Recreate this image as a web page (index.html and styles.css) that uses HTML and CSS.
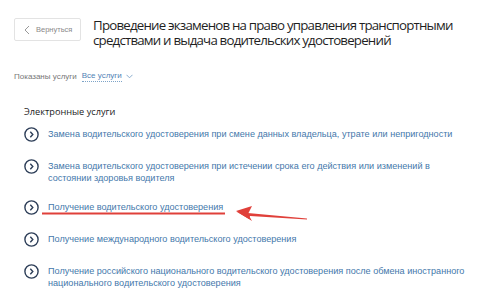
FILE: index.html
```html
<!DOCTYPE html>
<html lang="ru">
<head>
<meta charset="utf-8">
<link rel="stylesheet" href="styles.css">
</head>
<body>
<div class="page">
  <header class="head">
    <a class="back">
      <svg width="6" height="10" viewBox="0 0 6 10"><path d="M5 1 L1 5 L5 9" fill="none" stroke="#999" stroke-width="1"/></svg>
      <span>Вернуться</span>
    </a>
    <h1 class="title">Проведение экзаменов на право управления транспортными средствами и выдача водительских удостоверений</h1>
  </header>
  <div class="filter">
    <span class="label">Показаны услуги</span>
    <span class="select">Все услуги</span>
    <svg class="caret" width="7" height="5" viewBox="0 0 7 5"><path d="M0.5 0.8 L3.5 3.8 L6.5 0.8" fill="none" stroke="#7ea4c8" stroke-width="0.9"/></svg>
  </div>
  <section class="services">
    <h2 class="sub">Электронные услуги</h2>
    <ul class="list">
      <li class="item"><span class="ico"><svg width="15" height="15" viewBox="0 0 15 15"><circle cx="7.5" cy="7.5" r="6.6" fill="none" stroke="#2d3e58" stroke-width="1.4"/><path d="M6.3 4.8 L8.8 7.5 L6.3 10.2" fill="none" stroke="#2d3e58" stroke-width="1.4"/></svg></span><span class="txt">Замена водительского удостоверения при смене данных владельца, утрате или непригодности</span></li>
      <li class="item"><span class="ico"><svg width="15" height="15" viewBox="0 0 15 15"><circle cx="7.5" cy="7.5" r="6.6" fill="none" stroke="#2d3e58" stroke-width="1.4"/><path d="M6.3 4.8 L8.8 7.5 L6.3 10.2" fill="none" stroke="#2d3e58" stroke-width="1.4"/></svg></span><span class="txt">Замена водительского удостоверения при истечении срока его действия или изменений в состоянии здоровья водителя</span></li>
      <li class="item marked"><span class="ico"><svg width="15" height="15" viewBox="0 0 15 15"><circle cx="7.5" cy="7.5" r="6.6" fill="none" stroke="#2d3e58" stroke-width="1.4"/><path d="M6.3 4.8 L8.8 7.5 L6.3 10.2" fill="none" stroke="#2d3e58" stroke-width="1.4"/></svg></span><span class="txt">Получение водительского удостоверения</span>
        <svg class="arrow" width="280" height="20" viewBox="0 0 280 20"><path d="M0 11.5 L183 11.5" stroke="#e0403a" stroke-width="2"/><path d="M195 10 L265 16.5 L265 17.5 L208 14 L207 17 Z" fill="#e0403a"/><path d="M194 9 L210 4 L206 12 L210 19 Z" fill="#e0403a"/></svg>
      </li>
      <li class="item"><span class="ico"><svg width="15" height="15" viewBox="0 0 15 15"><circle cx="7.5" cy="7.5" r="6.6" fill="none" stroke="#2d3e58" stroke-width="1.4"/><path d="M6.3 4.8 L8.8 7.5 L6.3 10.2" fill="none" stroke="#2d3e58" stroke-width="1.4"/></svg></span><span class="txt">Получение международного водительского удостоверения</span></li>
      <li class="item"><span class="ico"><svg width="15" height="15" viewBox="0 0 15 15"><circle cx="7.5" cy="7.5" r="6.6" fill="none" stroke="#2d3e58" stroke-width="1.4"/><path d="M6.3 4.8 L8.8 7.5 L6.3 10.2" fill="none" stroke="#2d3e58" stroke-width="1.4"/></svg></span><span class="txt">Получение российского национального водительского удостоверения после обмена иностранного национального водительского удостоверения</span></li>
    </ul>
  </section>
</div>
</body>
</html>
```
FILE: styles.css
```css
* { box-sizing: border-box; }
html, body { margin: 0; padding: 0; background: #fff; }
body { width: 480px; height: 297px; overflow: hidden; font-family: "Liberation Sans", Arial, sans-serif; }
.page { padding: 18px 14px 0 14px; }
.head { display: flex; align-items: flex-start; gap: 12px; }
.back {
  display: flex; align-items: center; gap: 6px;
  width: 67px; height: 23px; flex: none;
  border: 1px solid #e3e3e3; border-radius: 2px;
  padding-left: 9px;
  font-size: 7.5px; color: #8a8a8a;
}
.back svg { flex: none; }
.title {
  margin: 0;
  font-family: "Open Sans", sans-serif; font-weight: 400;
  font-size: 13.3px; line-height: 15px; color: #1f1f1f;
  letter-spacing: -0.8px;
}
.filter { display: flex; align-items: center; margin-top: 23px; font-size: 8px; }
.label { color: #777; }
.select { margin-left: 5px; color: #4f82b5; border-bottom: 1px dotted #7ea4c8; line-height: 10px; }
.caret { margin-left: 4px; }
.services { padding-left: 10px; margin-top: 24px; }
.sub { margin: 0; font-family: "Open Sans", sans-serif; font-weight: 400; font-size: 9.2px; color: #222; line-height: 12px; }
.list { list-style: none; margin: 10px 0 0 0; padding: 0; }
.item { position: relative; display: flex; align-items: flex-start; gap: 9px; min-height: 12px; margin-bottom: 19px; }
.item:first-child { margin-bottom: 18px; }
.item:nth-child(2) { margin-bottom: 17px; }
.item:nth-child(3) { margin-bottom: 18px; }
.item:nth-child(4) { margin-bottom: 18px; }
.ico { flex: none; width: 15px; height: 15px; margin-top: -1px; }
.ico svg { display: block; }
.txt { color: #4478ab; font-size: 9.1px; line-height: 12px; }
.arrow { position: absolute; left: 18px; top: 1px; }
```
